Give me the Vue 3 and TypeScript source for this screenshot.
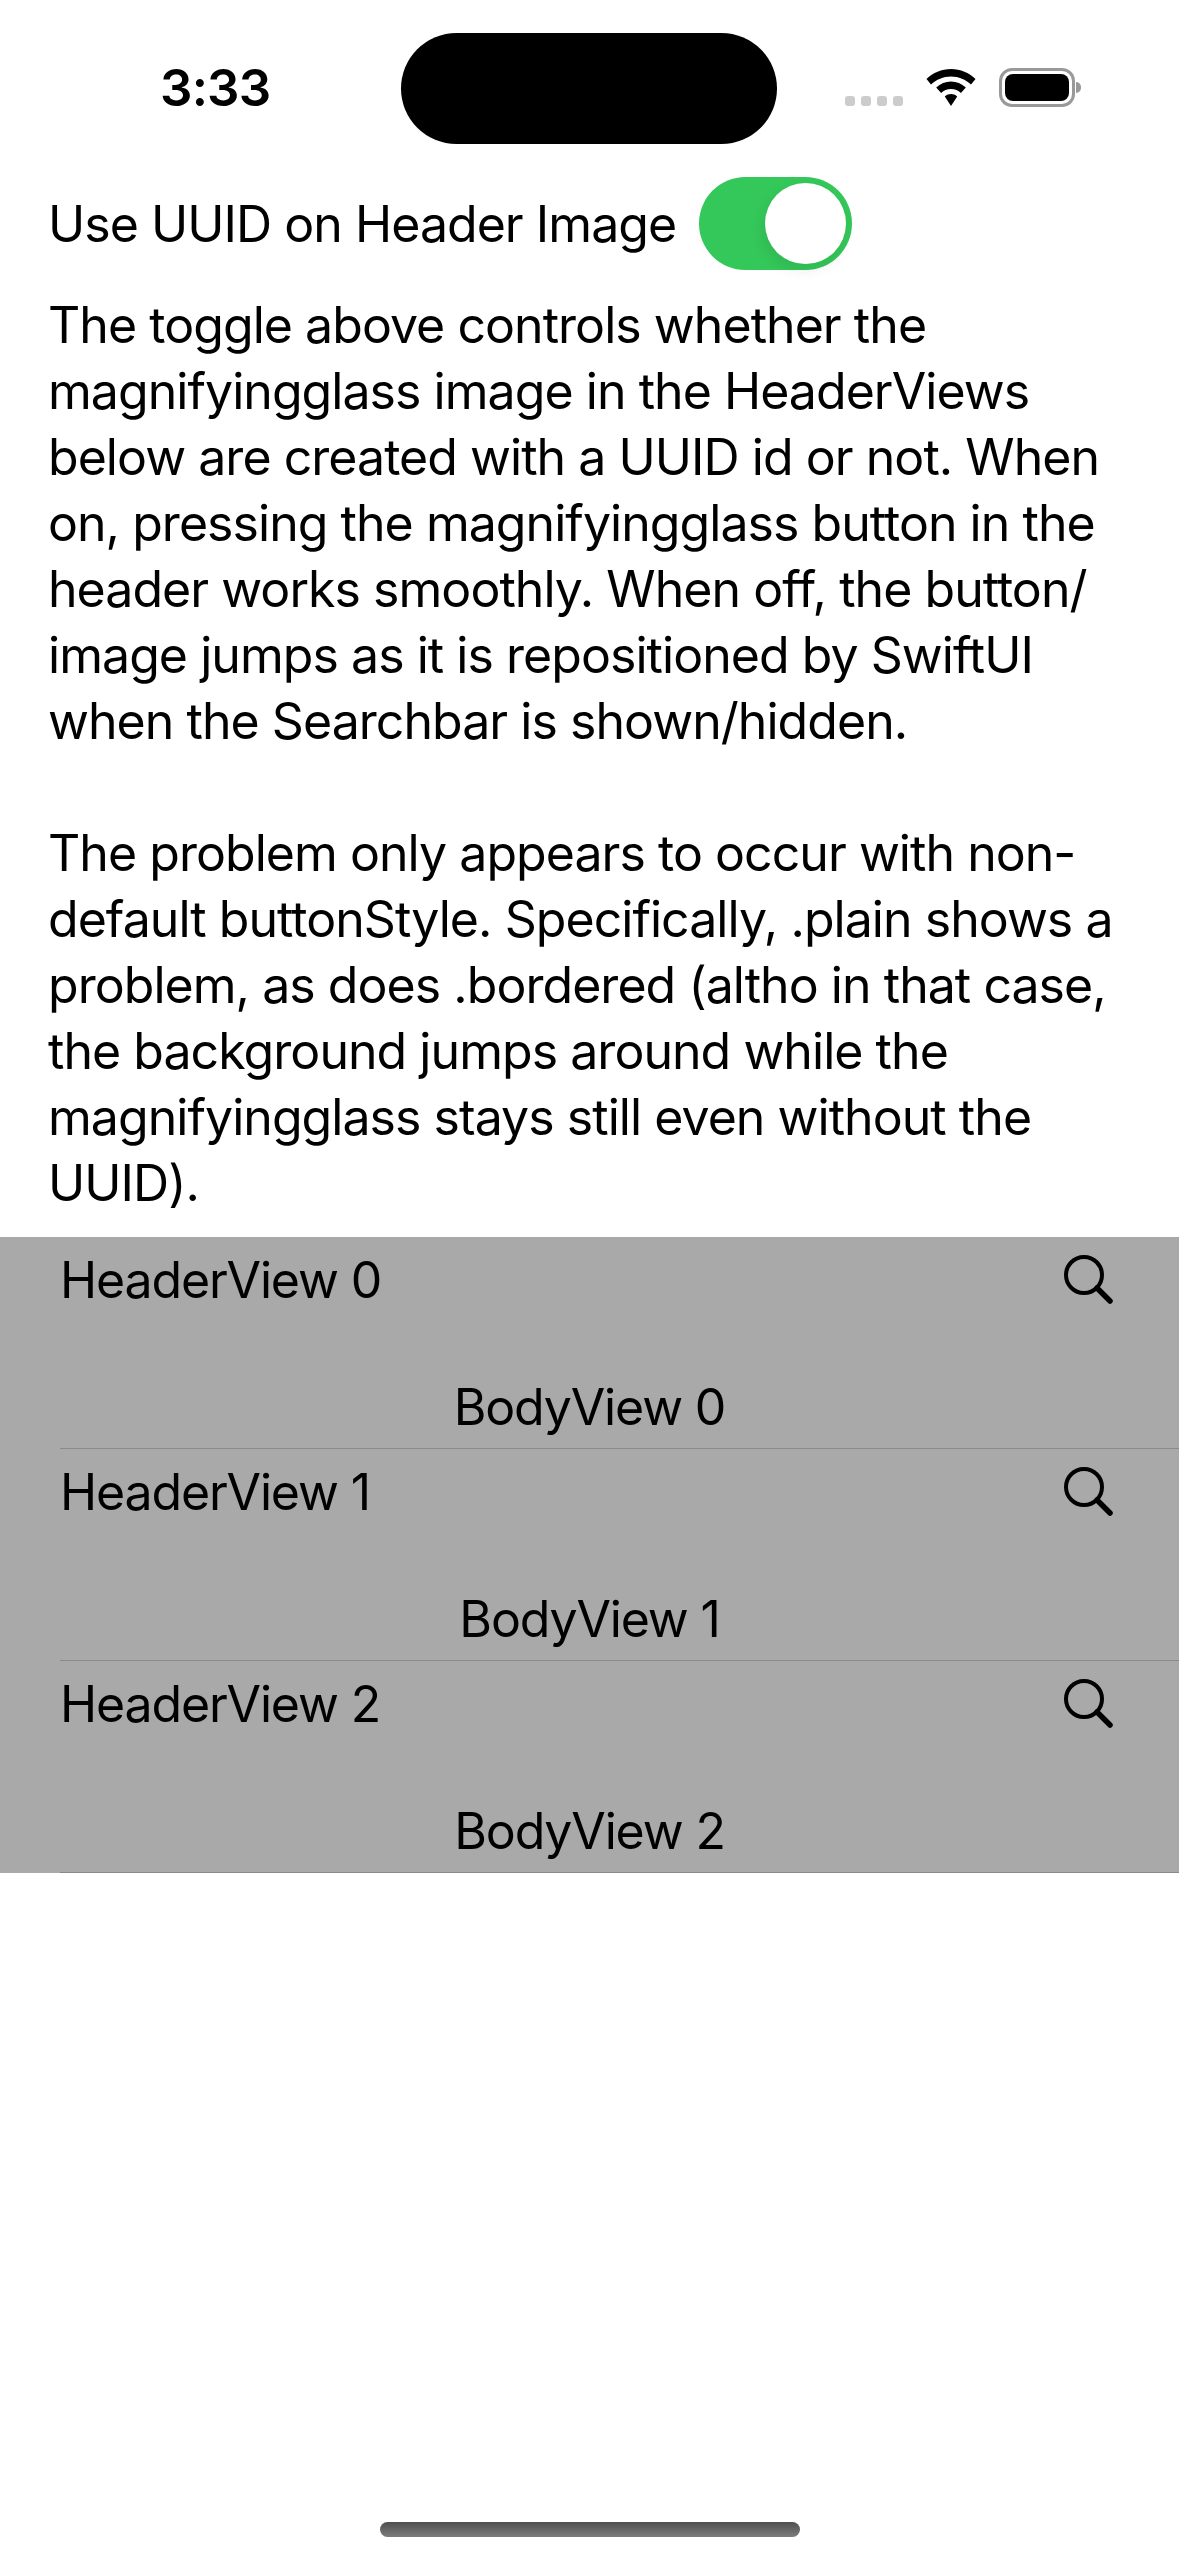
<script setup lang="ts">
const intro = [
  'The toggle above controls whether the',
  'magnifyingglass image in the HeaderViews',
  'below are created with a UUID id or not. When',
  'on, pressing the magnifyingglass button in the',
  'header works smoothly. When off, the button/',
  'image jumps as it is repositioned by SwiftUI',
  'when the Searchbar is shown/hidden.',
  '\u00a0',
  'The problem only appears to occur with non-',
  'default buttonStyle. Specifically, .plain shows a',
  'problem, as does .bordered (altho in that case,',
  'the background jumps around while the',
  'magnifyingglass stays still even without the',
  'UUID).',
]
const rows = [0, 1, 2]
</script>

<template>
  <div class="screen">
    <div class="status">
      <span class="time">3:33</span>
      <div class="island"></div>
      <div class="indicators">
        <div class="signal"><i></i><i></i><i></i><i></i></div>
        <svg class="wifi" width="50" height="37" viewBox="0 0 50 37">
          <path d="M25 0C15.500 0 7 3.800 0.500 10L5 15.500C10.300 10.500 17.300 7.500 25 7.500C32.700 7.500 39.700 10.500 45 15.500L49.500 10C43 3.800 34.500 0 25 0Z" />
          <path d="M25 12.500C19.500 12.500 14.400 14.700 10.200 18.500L15.100 24C17.700 21.500 21.200 20 25 20C28.800 20 32.300 21.500 34.900 24L39.800 18.500C35.600 14.700 30.500 12.500 25 12.500Z" />
          <path d="M25 25C23 25 20.800 25.700 18.800 27.400L25 37L31.200 27.400C29.200 25.700 27 25 25 25Z" />
        </svg>
        <div class="battery"><div class="level"></div></div>
        <div class="nub"></div>
      </div>
    </div>

    <div class="toggle-row">
      <span>Use UUID on Header Image</span>
      <div class="switch"><div class="knob"></div></div>
    </div>

    <div class="intro">
      <div v-for="(line, i) in intro" :key="i">{{ line }}</div>
    </div>

    <div class="list">
      <div v-for="n in rows" :key="n" class="row">
        <div class="row-head">
          <span>HeaderView {{ n }}</span>
          <svg class="search" width="50" height="50" viewBox="0 0 50 50" fill="none">
            <circle cx="20" cy="20" r="18" stroke="#000" stroke-width="4" />
            <path d="M33 33L46 46" stroke="#000" stroke-width="5.500" stroke-linecap="round" />
          </svg>
        </div>
        <div class="row-body">BodyView {{ n }}</div>
      </div>
    </div>

    <div class="home"></div>
  </div>
</template>

<style>
html,
body {
  margin: 0;
  background: #fff;
}
</style>

<style scoped>
.screen {
  position: relative;
  width: 1179px;
  height: 2556px;
  overflow: hidden;
  background: #fff;
  color: #000;
  font-family: Inter, "Liberation Sans", sans-serif;
  font-size: 50px;
  letter-spacing: -0.95px;
}

.status {
  height: 177px;
  box-sizing: border-box;
  position: relative;
}

.time {
  position: absolute;
  left: 160px;
  top: 57px;
  font-size: 51px;
  line-height: 62px;
  font-weight: 600;
  letter-spacing: -0.8px;
}

.island {
  position: absolute;
  left: 401px;
  top: 33px;
  width: 376px;
  height: 111px;
  border-radius: 56px;
  background: #000;
}

.indicators {
  position: absolute;
  left: 845px;
  top: 68px;
  width: 240px;
  height: 40px;
}

.signal {
  position: absolute;
  left: 0;
  top: 28px;
  display: flex;
  gap: 6px;
}

.signal i {
  width: 10px;
  height: 10px;
  border-radius: 3px;
  background: #ccc;
}

.wifi {
  position: absolute;
  left: 81px;
  top: 1px;
}

.battery {
  position: absolute;
  left: 154px;
  top: 0;
  width: 76px;
  height: 39px;
  box-sizing: border-box;
  border: 3px solid #999;
  border-radius: 13px;
  padding: 3px;
}

.level {
  height: 100%;
  border-radius: 8px;
  background: #000;
}

.nub {
  position: absolute;
  left: 231px;
  top: 14px;
  width: 5px;
  height: 11px;
  border-radius: 0 5px 5px 0;
  background: #999;
}

.toggle-row {
  display: flex;
  align-items: center;
  gap: 23px;
  height: 93px;
  padding-left: 48px;
}

.switch {
  width: 153px;
  height: 93px;
  box-sizing: border-box;
  padding: 6px;
  border-radius: 47px;
  background: #34c759;
  display: flex;
  justify-content: flex-end;
}

.knob {
  width: 81px;
  height: 81px;
  border-radius: 50%;
  background: #fff;
  box-shadow: -2px 6px 14px rgba(0, 0, 0, 0.08);
}

.intro {
  margin-top: 22px;
  padding-left: 48px;
  line-height: 66px;
  white-space: nowrap;
}

.list {
  margin-top: 21px;
  background: #a9a9a9;
}

.row {
  height: 212px;
  box-sizing: border-box;
  position: relative;
}

.row::after {
  content: "";
  position: absolute;
  left: 60px;
  right: 0;
  bottom: 0;
  height: 1px;
  background: #8a8a8a;
}

.row-head {
  display: flex;
  justify-content: space-between;
  align-items: center;
  height: 86px;
  padding: 0 65px 0 60px;
  letter-spacing: -1.15px;
}

.search {
  flex: none;
}

.row-body {
  margin-top: 51px;
  height: 66px;
  line-height: 66px;
  text-align: center;
  letter-spacing: -1.15px;
}

.home {
  position: absolute;
  left: 380px;
  bottom: 19px;
  width: 420px;
  height: 15px;
  border-radius: 8px;
  background: linear-gradient(#4f4f4f, #7c7c7c);
}
</style>
